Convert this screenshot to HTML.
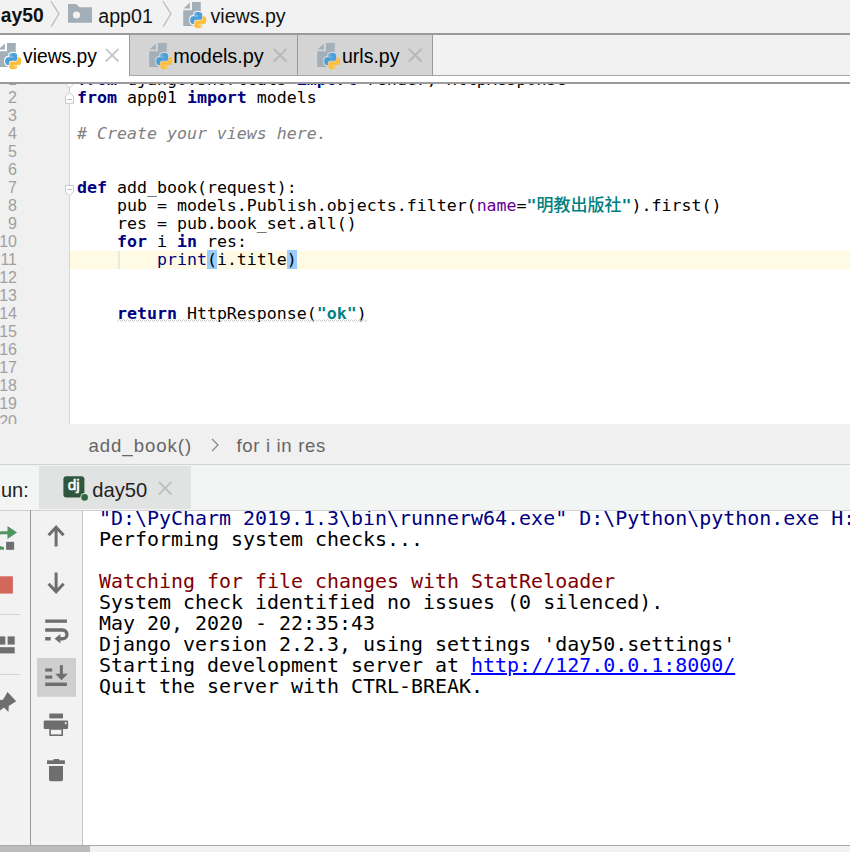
<!DOCTYPE html>
<html><head><meta charset="utf-8">
<style>
html,body{margin:0;padding:0;}
body{width:850px;height:852px;overflow:hidden;position:relative;background:#f2f2f2;font-family:"Liberation Sans","Noto Sans CJK SC",sans-serif;color:#000;}
.abs{position:absolute;}
.ui{font-family:"Liberation Sans",sans-serif;white-space:nowrap;}
#crumb{left:0;top:0;width:850px;height:33px;background:#f2f2f2;}
#crumbline{left:0;top:33px;width:850px;height:2px;background:linear-gradient(#9a9a9a 0,#9a9a9a 75%,#c8c8c8 100%);}
#tabs{left:0;top:35px;width:850px;height:47px;background:#fff;}
#tabline{left:0;top:82px;width:850px;height:2px;background:#9c9c9c;}
#tabr{left:433px;top:35px;width:417px;height:40px;background:#f2f2f2;border-bottom:1px solid #a8a8a8;}
#tabA{left:0;top:35px;width:128px;height:47px;background:#fff;}
.tabI{top:35px;height:40px;background:#d4d4d4;border-right:1px solid #9a9a9a;border-bottom:1px solid #a8a8a8;}
.tabtxt{font-size:19.300px;line-height:22px;color:#000;}
#editor{left:0;top:84px;width:850px;height:340px;background:#fff;overflow:hidden;}
#gutter{left:0;top:0;width:69px;height:340px;background:#f0f0f0;border-right:1px solid #d6d6d6;}
.code{font-family:"DejaVu Sans Mono","Liberation Mono","Noto Sans CJK SC",monospace;font-size:16.6px;line-height:18px;white-space:pre;color:#000;}
.ln{left:-3px;width:20px;text-align:right;color:#a0a0a0;font-family:"Liberation Sans",sans-serif;font-size:16px;line-height:18px;height:18px;}
.cl{left:77px;height:18px;}
.hl{background:#99ccff;}
.k{color:#000080;font-weight:bold;}
.c{color:#808080;font-style:italic;}
.s{color:#008080;font-weight:bold;}
.zh{font-size:17px;line-height:0;font-weight:500;}
.p{color:#660099;}
#nav{left:0;top:424px;width:850px;height:40px;background:#f0f0f0;border-bottom:1px solid #d2d2d2;}
#runbar{left:0;top:465px;width:850px;height:45px;background:#f3f5f4;}
#runtab{left:39px;top:466px;width:152px;height:43px;background:#e1e3e2;}
#console{left:83px;top:511px;width:767px;height:334px;background:#fff;overflow:hidden;}
.con{font-family:"DejaVu Sans Mono","Liberation Mono",monospace;font-size:19.950px;line-height:21px;white-space:pre;left:16px;height:21px;color:#000;}
</style></head><body>

<div id="crumb" class="abs"></div>
<div id="crumbline" class="abs"></div>
<div class="abs" style="left:1px;top:0;width:60px;height:33px;overflow:hidden;"><div class="abs ui" style="left:-12px;top:4px;font-size:19.300px;line-height:24px;font-weight:bold;color:#111;">day50</div></div>
<svg class="abs" style="left:48.500px;top:0.200px" width="12" height="28" viewBox="0 0 12 28"><path d="M1.800 1 L10 13.800 L2.200 26.600" fill="none" stroke="#bcbcbc" stroke-width="1.300"/></svg>
<svg class="abs" style="left:68px;top:3.700px" width="25" height="19" viewBox="0 0 25 19"><path d="M0 0 H8 L11.500 3.300 H24 V18.700 H0 Z" fill="#a2afb9"/><circle cx="8.500" cy="11" r="3.600" fill="#f2f2f2"/></svg>
<div class="abs ui" style="left:98.300px;top:4px;font-size:19.600px;line-height:24px;color:#111;">app01</div>
<svg class="abs" style="left:160.600px;top:0.200px" width="12" height="28" viewBox="0 0 12 28"><path d="M1.800 1 L10 13.800 L2.200 26.600" fill="none" stroke="#bcbcbc" stroke-width="1.300"/></svg>
<div class="abs ui" style="left:210.500px;top:4px;font-size:19.600px;line-height:24px;color:#111;">views.py</div>

<div id="tabs" class="abs"></div>
<div id="tabA" class="abs"></div>
<div id="tabr" class="abs"></div>
<div class="abs tabI" style="left:129px;width:167px;border-left:1px solid #9a9a9a;"></div>
<div class="abs tabI" style="left:298px;width:134px;"></div>
<div class="abs ui tabtxt" style="left:23px;top:45.600px;">views.py</div>
<div class="abs ui tabtxt" style="left:173.300px;top:45.300px;font-size:19.850px;">models.py</div>
<div class="abs ui tabtxt" style="left:342px;top:45.300px;font-size:19.500px;">urls.py</div>
<div id="tabline" class="abs"></div>

<div id="editor" class="abs">
  <div class="abs" style="left:70px;top:167px;width:780px;height:18px;background:#fffae3;"></div>
  <div id="gutter" class="abs"></div>
  <div class="abs ln" style="top:-13px;">1</div>
  <div class="abs ln" style="top:5px;">2</div>
  <div class="abs ln" style="top:23px;">3</div>
  <div class="abs ln" style="top:41px;">4</div>
  <div class="abs ln" style="top:59px;">5</div>
  <div class="abs ln" style="top:77px;">6</div>
  <div class="abs ln" style="top:95px;">7</div>
  <div class="abs ln" style="top:113px;">8</div>
  <div class="abs ln" style="top:131px;">9</div>
  <div class="abs ln" style="top:149px;">10</div>
  <div class="abs ln" style="top:167px;">11</div>
  <div class="abs ln" style="top:185px;">12</div>
  <div class="abs ln" style="top:203px;">13</div>
  <div class="abs ln" style="top:221px;">14</div>
  <div class="abs ln" style="top:239px;">15</div>
  <div class="abs ln" style="top:257px;">16</div>
  <div class="abs ln" style="top:275px;">17</div>
  <div class="abs ln" style="top:293px;">18</div>
  <div class="abs ln" style="top:311px;">19</div>
  <div class="abs ln" style="top:329px;">20</div>
  <div class="abs code cl" style="top:-13px;"><span class="k">from</span> django.shortcuts <span class="k">import</span> render, HttpResponse</div>
  <div class="abs code cl" style="top:5px;"><span class="k">from</span> app01 <span class="k">import</span> models</div>
  <div class="abs code cl" style="top:41px;"><span class="c"># Create your views here.</span></div>
  <div class="abs code cl" style="top:95px;"><span class="k">def</span> add_book(request):</div>
  <div class="abs code cl" style="top:113px;">    pub = models.Publish.objects.filter(<span class="p">name</span>=<span class="s">"<span class="zh">明教出版社</span>"</span>).first()</div>
  <div class="abs code cl" style="top:131px;">    res = pub.book_set.all()</div>
  <div class="abs code cl" style="top:149px;">    <span class="k">for</span> i <span class="k">in</span> res:</div>
  <div class="abs code cl" style="top:167px;">        <span style="color:#000080">print</span><span class="hl">(</span>i.title<span class="hl">)</span></div>
  <div class="abs code cl" style="top:221px;">    <span class="k">return</span> HttpResponse(<span class="s">"ok"</span>)</div>
</div>

<div id="nav" class="abs"></div>
<div class="abs ui" style="left:88.500px;top:435px;font-size:18.600px;line-height:22px;letter-spacing:0.950px;color:#666;">add_book()</div>
<div class="abs ui" style="left:236.500px;top:435px;font-size:18.600px;line-height:22px;letter-spacing:0.650px;color:#666;">for i in res</div>

<div id="runbar" class="abs"></div>
<div id="runtab" class="abs"></div>
<div class="abs ui" style="left:-13.500px;top:479px;font-size:20px;line-height:22px;color:#222;">Run:</div>
<div class="abs ui" style="left:92.300px;top:478.500px;font-size:20.200px;line-height:22px;color:#222;">day50</div>

<div class="abs" style="left:0;top:510px;width:850px;height:1px;background:#d0d0d0;"></div>
<div class="abs" style="left:30px;top:510px;width:1px;height:335px;background:#999;"></div>
<div class="abs" style="left:82px;top:510px;width:1px;height:335px;background:#c4c4c4;"></div>
<div id="console" class="abs">
  <div class="abs con" style="top:-3px;"><span style="color:#000080">"D:\PyCharm 2019.1.3\bin\runnerw64.exe" D:\Python\python.exe H:/day50/manage.py runserver 8000</span></div>
  <div class="abs con" style="top:18px;">Performing system checks...</div>
  <div class="abs con" style="top:60px;"><span style="color:#7f0000">Watching for file changes with StatReloader</span></div>
  <div class="abs con" style="top:81px;">System check identified no issues (0 silenced).</div>
  <div class="abs con" style="top:102px;">May 20, 2020 - 22:35:43</div>
  <div class="abs con" style="top:123px;">Django version 2.2.3, using settings 'day50.settings'</div>
  <div class="abs con" style="top:144px;">Starting development server at <span style="color:#0000ff;text-decoration:underline;text-underline-offset:0.600px;text-decoration-thickness:1.800px">http://127.0.0.1:8000/</span></div>
  <div class="abs con" style="top:165px;">Quit the server with CTRL-BREAK.</div>
</div>
<div class="abs" style="left:0;top:845px;width:850px;height:1px;background:#aaa;"></div>
<div class="abs" style="left:0;top:846px;width:90px;height:6px;background:#bbb;"></div>
<!--ICONS-->
<svg class="abs" style="left:182.3px;top:1.8px" width="26" height="28" viewBox="0 0 26 28"><path d="M10 0 H18.800 V24 H1.200 V8.200 H10 Z" fill="#a3b0ba"/><path d="M1.500 6.400 L7.900 0.400 V6.400 Z" fill="#a3b0ba"/><g transform="translate(8.200,10) scale(0.1455)"><path d="M54.9 0c-4.6 0-8.9.4-12.8 1.1C30.8 3.1 28.7 7.3 28.7 15v10.2h26.8v3.4H18.7c-7.8 0-14.6 4.7-16.7 13.600-2.500 10.200-2.600 16.600 0 27.200 1.900 7.900 6.500 13.600 14.200 13.600h9.200V70.700c0-8.800 7.600-16.600 16.700-16.600h26.800c7.400 0 13.400-6.100 13.400-13.600V15c0-7.300-6.100-12.700-13.400-13.900C64.300.3 59.500 0 54.900 0z" fill="#f2f2f2" stroke="#f2f2f2" stroke-width="16" stroke-linejoin="round"/><path d="M85.600 28.700v11.900c0 9.200-7.800 17-16.700 17H42.100c-7.300 0-13.400 6.300-13.400 13.600v25.500c0 7.300 6.300 11.500 13.400 13.600 8.500 2.500 16.600 2.900 26.800 0 6.700-2 13.400-5.900 13.400-13.600V86.500H55.500v-3.400h40.200c7.800 0 10.700-5.400 13.400-13.600 2.800-8.400 2.700-16.500 0-27.200-1.900-7.700-5.600-13.600-13.400-13.600H85.600z" fill="#f2f2f2" stroke="#f2f2f2" stroke-width="16" stroke-linejoin="round"/><path d="M54.9 0c-4.6 0-8.9.4-12.8 1.1C30.8 3.1 28.7 7.3 28.7 15v10.2h26.8v3.4H18.7c-7.8 0-14.6 4.7-16.7 13.600-2.500 10.200-2.600 16.600 0 27.200 1.900 7.900 6.500 13.600 14.200 13.600h9.200V70.700c0-8.800 7.600-16.600 16.700-16.600h26.800c7.400 0 13.400-6.100 13.400-13.600V15c0-7.300-6.100-12.700-13.400-13.900C64.300.3 59.500 0 54.900 0z" fill="#4b9fd8"/><path d="M85.600 28.700v11.900c0 9.200-7.800 17-16.700 17H42.100c-7.300 0-13.400 6.300-13.400 13.600v25.500c0 7.300 6.300 11.500 13.400 13.600 8.500 2.500 16.600 2.900 26.800 0 6.700-2 13.400-5.900 13.400-13.600V86.500H55.500v-3.400h40.200c7.800 0 10.700-5.400 13.400-13.600 2.800-8.400 2.700-16.500 0-27.200-1.900-7.700-5.600-13.600-13.400-13.600H85.600z" fill="#fdbf3f"/><circle cx="40.400" cy="13.300" r="5" fill="#8cc4ea"/><circle cx="70.500" cy="98.400" r="5" fill="#fde0a0"/></g></svg>
<svg class="abs" style="left:-3px;top:43px" width="26" height="28" viewBox="0 0 26 28"><path d="M10 0 H18.800 V24 H1.200 V8.200 H10 Z" fill="#a3b0ba"/><path d="M1.500 6.400 L7.900 0.400 V6.400 Z" fill="#a3b0ba"/><g transform="translate(8.200,10) scale(0.1455)"><path d="M54.9 0c-4.6 0-8.9.4-12.8 1.1C30.8 3.1 28.7 7.3 28.7 15v10.2h26.8v3.4H18.7c-7.8 0-14.6 4.7-16.7 13.600-2.500 10.200-2.600 16.600 0 27.200 1.900 7.900 6.500 13.600 14.200 13.600h9.200V70.700c0-8.800 7.600-16.600 16.700-16.600h26.800c7.400 0 13.400-6.100 13.400-13.600V15c0-7.300-6.100-12.700-13.400-13.900C64.300.3 59.500 0 54.900 0z" fill="#ffffff" stroke="#ffffff" stroke-width="16" stroke-linejoin="round"/><path d="M85.600 28.700v11.900c0 9.200-7.800 17-16.700 17H42.100c-7.300 0-13.400 6.300-13.400 13.600v25.500c0 7.300 6.300 11.500 13.400 13.600 8.500 2.500 16.600 2.900 26.800 0 6.700-2 13.400-5.900 13.400-13.600V86.500H55.500v-3.400h40.200c7.800 0 10.700-5.400 13.400-13.600 2.800-8.400 2.700-16.500 0-27.200-1.900-7.700-5.600-13.600-13.400-13.600H85.600z" fill="#ffffff" stroke="#ffffff" stroke-width="16" stroke-linejoin="round"/><path d="M54.9 0c-4.6 0-8.9.4-12.8 1.1C30.8 3.1 28.7 7.3 28.7 15v10.2h26.8v3.4H18.7c-7.8 0-14.6 4.7-16.7 13.600-2.500 10.200-2.600 16.600 0 27.200 1.900 7.900 6.500 13.600 14.200 13.600h9.200V70.700c0-8.800 7.600-16.600 16.700-16.600h26.800c7.400 0 13.400-6.100 13.400-13.600V15c0-7.300-6.100-12.700-13.400-13.900C64.300.3 59.500 0 54.900 0z" fill="#4b9fd8"/><path d="M85.600 28.700v11.900c0 9.200-7.800 17-16.700 17H42.100c-7.300 0-13.400 6.300-13.400 13.600v25.500c0 7.300 6.300 11.500 13.400 13.600 8.500 2.500 16.600 2.900 26.800 0 6.700-2 13.400-5.900 13.400-13.600V86.500H55.500v-3.400h40.200c7.800 0 10.700-5.400 13.400-13.600 2.800-8.400 2.700-16.500 0-27.200-1.900-7.700-5.600-13.600-13.400-13.600H85.600z" fill="#fdbf3f"/><circle cx="40.400" cy="13.300" r="5" fill="#8cc4ea"/><circle cx="70.500" cy="98.400" r="5" fill="#fde0a0"/></g></svg>
<svg class="abs" style="left:148px;top:43px" width="26" height="28" viewBox="0 0 26 28"><path d="M10 0 H18.800 V24 H1.200 V8.200 H10 Z" fill="#a3b0ba"/><path d="M1.500 6.400 L7.900 0.400 V6.400 Z" fill="#a3b0ba"/><g transform="translate(8.200,10) scale(0.1455)"><path d="M54.9 0c-4.6 0-8.9.4-12.8 1.1C30.8 3.1 28.7 7.3 28.7 15v10.2h26.8v3.4H18.7c-7.8 0-14.6 4.7-16.7 13.600-2.500 10.200-2.600 16.600 0 27.200 1.900 7.900 6.500 13.600 14.200 13.600h9.200V70.700c0-8.800 7.600-16.600 16.700-16.600h26.800c7.400 0 13.400-6.100 13.400-13.600V15c0-7.300-6.100-12.700-13.400-13.900C64.300.3 59.500 0 54.900 0z" fill="#d6d6d6" stroke="#d6d6d6" stroke-width="16" stroke-linejoin="round"/><path d="M85.600 28.700v11.900c0 9.200-7.800 17-16.700 17H42.100c-7.300 0-13.400 6.300-13.400 13.600v25.500c0 7.300 6.300 11.500 13.400 13.600 8.500 2.500 16.600 2.900 26.800 0 6.700-2 13.400-5.900 13.400-13.600V86.500H55.500v-3.400h40.200c7.800 0 10.700-5.400 13.400-13.600 2.800-8.400 2.700-16.500 0-27.200-1.900-7.700-5.600-13.600-13.400-13.600H85.600z" fill="#d6d6d6" stroke="#d6d6d6" stroke-width="16" stroke-linejoin="round"/><path d="M54.9 0c-4.6 0-8.9.4-12.8 1.1C30.8 3.1 28.7 7.3 28.7 15v10.2h26.8v3.4H18.7c-7.8 0-14.6 4.7-16.7 13.600-2.500 10.200-2.600 16.600 0 27.200 1.900 7.900 6.500 13.600 14.200 13.600h9.200V70.700c0-8.800 7.600-16.600 16.700-16.600h26.800c7.400 0 13.400-6.100 13.400-13.600V15c0-7.300-6.100-12.700-13.400-13.900C64.300.3 59.500 0 54.900 0z" fill="#4b9fd8"/><path d="M85.600 28.700v11.900c0 9.200-7.800 17-16.700 17H42.100c-7.300 0-13.400 6.300-13.400 13.600v25.500c0 7.300 6.300 11.500 13.400 13.600 8.500 2.500 16.600 2.900 26.800 0 6.700-2 13.400-5.900 13.400-13.600V86.500H55.500v-3.400h40.200c7.800 0 10.700-5.400 13.400-13.600 2.800-8.400 2.700-16.500 0-27.200-1.900-7.700-5.600-13.600-13.400-13.600H85.600z" fill="#fdbf3f"/><circle cx="40.400" cy="13.300" r="5" fill="#8cc4ea"/><circle cx="70.500" cy="98.400" r="5" fill="#fde0a0"/></g></svg>
<svg class="abs" style="left:316px;top:43px" width="26" height="28" viewBox="0 0 26 28"><path d="M10 0 H18.800 V24 H1.200 V8.200 H10 Z" fill="#a3b0ba"/><path d="M1.500 6.400 L7.900 0.400 V6.400 Z" fill="#a3b0ba"/><g transform="translate(8.200,10) scale(0.1455)"><path d="M54.9 0c-4.6 0-8.9.4-12.8 1.1C30.8 3.1 28.7 7.3 28.7 15v10.2h26.8v3.4H18.7c-7.8 0-14.6 4.7-16.7 13.600-2.500 10.200-2.600 16.600 0 27.200 1.900 7.900 6.500 13.600 14.200 13.600h9.200V70.700c0-8.800 7.600-16.600 16.700-16.600h26.800c7.400 0 13.400-6.100 13.400-13.600V15c0-7.300-6.100-12.700-13.400-13.900C64.300.3 59.500 0 54.900 0z" fill="#d6d6d6" stroke="#d6d6d6" stroke-width="16" stroke-linejoin="round"/><path d="M85.600 28.700v11.900c0 9.200-7.800 17-16.700 17H42.100c-7.300 0-13.400 6.300-13.400 13.600v25.500c0 7.300 6.300 11.500 13.400 13.600 8.500 2.500 16.600 2.900 26.800 0 6.700-2 13.400-5.900 13.400-13.600V86.500H55.500v-3.400h40.200c7.800 0 10.700-5.400 13.400-13.600 2.800-8.400 2.700-16.500 0-27.200-1.900-7.700-5.600-13.600-13.400-13.600H85.600z" fill="#d6d6d6" stroke="#d6d6d6" stroke-width="16" stroke-linejoin="round"/><path d="M54.9 0c-4.6 0-8.9.4-12.8 1.1C30.8 3.1 28.7 7.3 28.7 15v10.2h26.8v3.4H18.7c-7.8 0-14.6 4.7-16.7 13.600-2.500 10.200-2.600 16.600 0 27.200 1.900 7.900 6.500 13.600 14.200 13.600h9.200V70.700c0-8.800 7.600-16.600 16.700-16.600h26.800c7.400 0 13.400-6.100 13.400-13.600V15c0-7.300-6.100-12.700-13.400-13.900C64.300.3 59.500 0 54.900 0z" fill="#4b9fd8"/><path d="M85.600 28.700v11.900c0 9.200-7.800 17-16.700 17H42.100c-7.300 0-13.400 6.300-13.400 13.600v25.500c0 7.300 6.300 11.500 13.400 13.600 8.500 2.500 16.600 2.900 26.800 0 6.700-2 13.400-5.900 13.400-13.600V86.500H55.500v-3.400h40.200c7.800 0 10.700-5.400 13.400-13.600 2.800-8.400 2.700-16.500 0-27.200-1.900-7.700-5.600-13.600-13.400-13.600H85.600z" fill="#fdbf3f"/><circle cx="40.400" cy="13.300" r="5" fill="#8cc4ea"/><circle cx="70.500" cy="98.400" r="5" fill="#fde0a0"/></g></svg>
<svg class="abs" style="left:105px;top:48px" width="15" height="15" viewBox="0 0 15 15"><path d="M0.800 0.800 L13.500 13.500 M13.500 0.800 L0.800 13.500" stroke="#c3c8cc" stroke-width="1.900" fill="none"/></svg>
<svg class="abs" style="left:273px;top:48px" width="15" height="15" viewBox="0 0 15 15"><path d="M0.800 0.800 L13.500 13.500 M13.500 0.800 L0.800 13.500" stroke="#b4b8bb" stroke-width="1.900" fill="none"/></svg>
<svg class="abs" style="left:408px;top:48px" width="15" height="15" viewBox="0 0 15 15"><path d="M0.800 0.800 L13.500 13.500 M13.500 0.800 L0.800 13.500" stroke="#b4b8bb" stroke-width="1.900" fill="none"/></svg>
<svg class="abs" style="left:158px;top:481px" width="15" height="15" viewBox="0 0 15 15"><path d="M0.800 0.800 L13.500 13.500 M13.500 0.800 L0.800 13.500" stroke="#bcc0c3" stroke-width="1.900" fill="none"/></svg>
<svg class="abs" style="left:62px;top:475px" width="30" height="30" viewBox="62 475 30 30"><rect x="63.400" y="476.200" width="21" height="21.200" rx="3" fill="#30573d"/><circle cx="84.600" cy="497.400" r="4.300" fill="#e1e3e2"/><circle cx="84.600" cy="497.400" r="3.300" fill="#2f6840"/><text x="73.800" y="490.400" text-anchor="middle" font-family="Liberation Sans, sans-serif" font-weight="normal" font-size="15.500" fill="#fff" stroke="#fff" stroke-width="0.550">dj</text></svg>
<svg class="abs" style="left:209.800px;top:438px" width="10" height="14" viewBox="0 0 10 14"><path d="M2 1 L8 7 L2 13" fill="none" stroke="#8c8c8c" stroke-width="1.400"/></svg>
<svg class="abs" style="left:0;top:510px" width="83" height="336" viewBox="0 510 83 336">
<path d="M-4 537 Q-3 532.800 2 532.800 H8" fill="none" stroke="#50945f" stroke-width="3.100"/>
<path d="M7.500 526 L17 532.600 L7.500 539 Z" fill="#50945f"/>
<path d="M-1 545.800 L4 547 V549.800 H-1 Z" fill="#50945f"/>
<rect x="6.100" y="541.800" width="8" height="8" fill="#6e6e6e"/>
<rect x="-2" y="576.300" width="14.900" height="17.300" fill="#d2675c"/>
<rect x="0" y="614" width="20" height="1" fill="#d4d4d4"/>
<rect x="-2" y="636.400" width="7.300" height="8.200" fill="#6e6e6e"/>
<rect x="7.600" y="636.400" width="7.100" height="8.200" fill="#6e6e6e"/>
<rect x="-2" y="647.200" width="16.700" height="6.200" fill="#6e6e6e"/>
<rect x="0" y="674" width="20" height="1" fill="#d4d4d4"/>
<path d="M7.500 692.100 L16.200 701.200 L8.700 705.900 L8.500 712.100 L4 707.600 L-1 711.300 V700 L3 699.800 Z" fill="#6e6e6e"/>
<path d="M56.100 546.400 V527 M48.600 535.200 L56.100 527.200 L63.600 535.200" fill="none" stroke="#6e6e6e" stroke-width="3"/>
<path d="M56.100 572.600 V592 M48.600 583.700 L56.100 591.700 L63.600 583.700" fill="none" stroke="#6e6e6e" stroke-width="3"/>
<rect x="45.200" y="619.500" width="21.700" height="3.300" fill="#6e6e6e"/>
<path d="M45.200 630 H62.500 A4.400 4.400 0 0 1 62.500 638.800 H60" fill="none" stroke="#6e6e6e" stroke-width="3.400"/>
<path d="M54.600 638.700 L60.400 634 V643.400 Z" fill="#6e6e6e"/>
<rect x="45.200" y="637" width="5.500" height="3.500" fill="#6e6e6e"/>
<rect x="37" y="658" width="39" height="38.800" fill="#cfcfcf"/>
<rect x="45.200" y="668.400" width="7" height="3.200" fill="#6e6e6e"/>
<rect x="45.200" y="675.500" width="7" height="3.200" fill="#6e6e6e"/>
<rect x="45.200" y="682.600" width="21.700" height="3.400" fill="#6e6e6e"/>
<rect x="59.900" y="665.100" width="3" height="10" fill="#6e6e6e"/>
<path d="M55.200 673.700 H67.800 L61.500 680.200 Z" fill="#6e6e6e"/>
<rect x="49.300" y="713.500" width="13.700" height="4.900" fill="#6e6e6e"/>
<rect x="43.700" y="720.500" width="24.400" height="8.500" rx="1.200" fill="#6e6e6e"/>
<rect x="64.800" y="722.300" width="1.800" height="1.800" fill="#f2f2f2"/>
<rect x="50.100" y="729" width="12.100" height="6.200" fill="#f2f2f2" stroke="#6e6e6e" stroke-width="1.600"/>
<rect x="47" y="760.300" width="17.900" height="3.700" fill="#6e6e6e"/>
<rect x="53.400" y="759" width="5.900" height="2" rx="0.800" fill="#6e6e6e"/>
<path d="M49 766 H63 V779.300 A2 2 0 0 1 61 781.300 H51 A2 2 0 0 1 49 779.300 Z" fill="#6e6e6e"/>
</svg>
<svg class="abs" style="left:60px;top:84px" width="320" height="340" viewBox="60 84 320 340">
<path d="M65.100 83.500 L69.500 88 L73.900 83.500" fill="#fff" stroke="#c9c9c9" stroke-width="1"/>
<path d="M69.500 88 V92.500" stroke="#c9c9c9" stroke-width="1"/>
<path d="M65.500 103.300 V96.200 L69.500 92.500 L73.500 96.200 V103.300 Z" fill="#fff" stroke="#c9c9c9" stroke-width="1"/>
<path d="M67.200 99.500 H71.800" stroke="#b8b8b8" stroke-width="1"/>
<path d="M65.500 185.400 H73.500 V191.900 L69.500 195.900 L65.500 191.900 Z" fill="#fff" stroke="#c9c9c9" stroke-width="1"/>
<path d="M67.200 189.500 H71.800" stroke="#b8b8b8" stroke-width="1"/>
<rect x="118.500" y="251" width="1" height="18" fill="#d8d8d8"/>
<path d="M117.500 321.500 L119.5 319.5 L121.5 321.5 L123.5 319.5 L125.5 321.5 L127.5 319.5 L129.5 321.5 L131.5 319.5 L133.5 321.5 L135.5 319.5 L137.5 321.5 L139.5 319.5 L141.5 321.5 L143.5 319.5 L145.5 321.5 L147.5 319.5 L149.5 321.5 L151.5 319.5 L153.5 321.5 L155.5 319.5 L157.5 321.5 L159.5 319.5 L161.5 321.5 L163.5 319.5 L165.5 321.5 L167.5 319.5 L169.5 321.5 L171.5 319.5 L173.5 321.5 L175.5 319.5 L177.5 321.5 L179.5 319.5 L181.5 321.5 L183.5 319.5 L185.5 321.5 L187.5 319.5 L189.5 321.5 L191.5 319.5 L193.5 321.5 L195.5 319.5 L197.5 321.5 L199.5 319.5 L201.5 321.5 L203.5 319.5 L205.5 321.5 L207.5 319.5 L209.5 321.5 L211.5 319.5 L213.5 321.5 L215.5 319.5 L217.5 321.5 L219.5 319.5 L221.5 321.5 L223.5 319.5 L225.5 321.5 L227.5 319.5 L229.5 321.5 L231.5 319.5 L233.5 321.5 L235.5 319.5 L237.5 321.5 L239.5 319.5 L241.5 321.5 L243.5 319.5 L245.5 321.5 L247.5 319.5 L249.5 321.5 L251.5 319.5 L253.5 321.5 L255.5 319.5 L257.5 321.5 L259.5 319.5 L261.5 321.5 L263.5 319.5 L265.5 321.5 L267.5 319.5 L269.5 321.5 L271.5 319.5 L273.5 321.5 L275.5 319.5 L277.5 321.5 L279.5 319.5 L281.5 321.5 L283.5 319.5 L285.5 321.5 L287.5 319.5 L289.5 321.5 L291.5 319.5 L293.5 321.5 L295.5 319.5 L297.5 321.5 L299.5 319.5 L301.5 321.5 L303.5 319.5 L305.5 321.5 L307.5 319.5 L309.5 321.5 L311.5 319.5 L313.5 321.5 L315.5 319.5 L317.5 321.5 L319.5 319.5 L321.5 321.5 L323.5 319.5 L325.5 321.5 L327.5 319.5 L329.5 321.5 L331.5 319.5 L333.5 321.5 L335.5 319.5 L337.5 321.5 L339.5 319.5 L341.5 321.5 L343.5 319.5 L345.5 321.5 L347.5 319.5 L349.5 321.5 L351.5 319.5 L353.5 321.5 L355.5 319.5 L357.5 321.5 L359.5 319.5 L361.5 321.5 L363.5 319.5 L365.5 321.5 L367.5 319.5" fill="none" stroke="#c4c4c4" stroke-width="0.900"/>
</svg>
<!--/ICONS-->
</body></html>
